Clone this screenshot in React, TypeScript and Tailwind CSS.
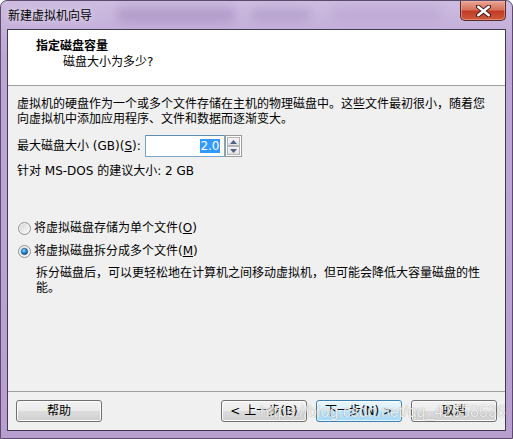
import React from 'react'

const font = "font-['DejaVu_Sans','Noto_Sans_CJK_SC',sans-serif]"

function Radio({ checked }: { checked?: boolean }) {
    return (
        <svg width="13" height="13" viewBox="0 0 13 13" className="shrink-0">
            <defs>
                <linearGradient id="rbFill" x1="0" y1="0" x2="1" y2="1">
                    <stop offset="0" stopColor="#d6d6d6" />
                    <stop offset="1" stopColor="#fbfbfb" />
                </linearGradient>
                <radialGradient id="rbDot" cx="0.4" cy="0.35" r="0.7">
                    <stop offset="0" stopColor="#8fe0ff" />
                    <stop offset="0.5" stopColor="#2a8ad4" />
                    <stop offset="1" stopColor="#0f3e75" />
                </radialGradient>
            </defs>
            <circle cx="6.5" cy="6.5" r="6" fill="#f4f4f4" stroke="#8c8f91" strokeWidth="1" />
            <circle cx="6.5" cy="6.5" r="4.6" fill="url(#rbFill)" />
            {checked && <circle cx="6.5" cy="6.5" r="3.2" fill="url(#rbDot)" stroke="#1b4a7a" strokeWidth="0.5" />}
        </svg>
    )
}

function WinButton({ children, isDefault }: { children: React.ReactNode; isDefault?: boolean }) {
    return (
        <div
            className={
                isDefault
                    ? 'w-[86px] h-[22px] rounded-[3px] border border-[#3c7fb1] shadow-[inset_0_0_0_1px_#ffffffb0] bg-[linear-gradient(to_bottom,#eaf6fd_0%,#d9f0fc_50%,#bee6fd_50%,#a7d9f5_100%)] flex items-center justify-center text-[12px] leading-[14px] text-black'
                    : 'w-[86px] h-[22px] rounded-[3px] border border-[#707070] shadow-[inset_0_0_0_1px_#fcfcfc] bg-[linear-gradient(to_bottom,#f2f2f2_0%,#ebebeb_50%,#dddddd_50%,#cfcfcf_100%)] flex items-center justify-center text-[12px] leading-[14px] text-black'
            }
        >
            {children}
        </div>
    )
}

function SpinArrow({ up }: { up?: boolean }) {
    return (
        <div className="flex-1 border border-[#b4b4b4] bg-[linear-gradient(to_bottom,#f6f6f6,#e2e2e2)] flex items-center justify-center">
            <svg width="7" height="4" viewBox="0 0 7 4">
                {up ? <path d="M0 4 L3.5 0 L7 4 Z" fill="#4d6185" /> : <path d="M0 0 L3.5 4 L7 0 Z" fill="#4d6185" />}
            </svg>
        </div>
    )
}

function CloseButton() {
    return (
        <div className="relative w-[46px] h-[20px] rounded-b-[5px] border border-t-0 border-[#5a2a24] bg-[linear-gradient(to_bottom,#eba494_0%,#d8735d_45%,#c23c25_55%,#cf5a3d_100%)] shadow-[inset_0_0_0_1px_#f0b8aa80] flex items-center justify-center">
            <svg width="15" height="12" viewBox="0 0 15 12">
                <path d="M2 1.5 L13 10.5 M13 1.5 L2 10.5" stroke="#3a1a16" strokeWidth="4.2" strokeLinecap="round" />
                <path d="M2.2 1.7 L12.8 10.3 M12.8 1.7 L2.2 10.3" stroke="#ffffff" strokeWidth="2.4" strokeLinecap="round" />
            </svg>
        </div>
    )
}

export default function App() {
    return (
        <div className={`${font} relative w-[513px] h-[439px] overflow-hidden rounded-t-[7px] border border-[#5b4c6b] bg-[linear-gradient(to_bottom,#cdbce0_0%,#bea7d6_12%,#b89fd0_100%)] flex flex-col`}>
            {/* vidro desfocado atrás da barra de título */}
            <div className="absolute left-[115px] top-[6px] w-[120px] h-[16px] rounded-full bg-[#8c74ac]/35 blur-[5px]" />
            <div className="absolute left-[250px] top-[8px] w-[60px] h-[12px] rounded-full bg-[#8c74ac]/30 blur-[5px]" />
            <div className="absolute left-[330px] top-[6px] w-[110px] h-[14px] rounded-full bg-[#a48cc2]/30 blur-[6px]" />

            {/* barra de título */}
            <div className="relative h-[28px] shrink-0 flex items-start justify-between pl-[7px] pr-[6px]">
                <span className="mt-[8px] text-[12px] leading-[14px] text-black [text-shadow:0_0_6px_#ffffffc0]">新建虚拟机向导</span>
                <CloseButton />
            </div>

            {/* área cliente */}
            <div className="relative mx-[6px] flex-1 border border-[#3f3a4c] bg-[#f0f0f0] flex flex-col">
                <div className="h-[56px] shrink-0 bg-white border-b border-[#a0a0a0] pt-[9px]">
                    <div className="pl-[28px] text-[12px] leading-[14px] font-bold text-black">指定磁盘容量</div>
                    <div className="pl-[55px] mt-[2px] text-[12px] leading-[14px] text-black">磁盘大小为多少?</div>
                </div>

                <div className="flex-1 pl-[9px] pt-[11px] text-[12px] text-black">
                    <p className="leading-[15px]">
                        虚拟机的硬盘作为一个或多个文件存储在主机的物理磁盘中。这些文件最初很小，随着您
                        <br />
                        向虚拟机中添加应用程序、文件和数据而逐渐变大。
                    </p>

                    <div className="mt-[8px] flex items-center h-[22px]">
                        <span className="leading-[14px] w-[128px]">
                            最大磁盘大小 (GB)(<u>S</u>):
                        </span>
                        <div className="flex h-[22px]">
                            <div className="w-[80px] h-[22px] bg-white border border-[#7aa6c9] border-t-[#5d8db3] flex items-center justify-end pr-[4px]">
                                <span className="bg-[#3399ff] text-white leading-[14px] px-[0.5px]">2.0</span>
                            </div>
                            <div className="w-[17px] h-[22px] flex flex-col border border-[#9a9a9a] bg-white p-[1px]">
                                <SpinArrow up />
                                <SpinArrow />
                            </div>
                        </div>
                    </div>

                    <p className="mt-[7px] leading-[14px]">针对 MS-DOS 的建议大小: 2 GB</p>

                    <div className="mt-[43px] flex items-center gap-[3px] h-[14px] pl-[1px]">
                        <Radio />
                        <span className="leading-[14px]">
                            将虚拟磁盘存储为单个文件(<u>O</u>)
                        </span>
                    </div>
                    <div className="mt-[9px] flex items-center gap-[3px] h-[14px] pl-[1px]">
                        <Radio checked />
                        <span className="leading-[14px]">
                            将虚拟磁盘拆分成多个文件(<u>M</u>)
                        </span>
                    </div>
                    <p className="mt-[8px] pl-[19px] leading-[15px]">
                        拆分磁盘后，可以更轻松地在计算机之间移动虚拟机，但可能会降低大容量磁盘的性
                        <br />
                        能。
                    </p>
                </div>

                <div className="h-[39px] shrink-0 border-t border-[#a0a0a0] flex items-start justify-between px-[8px] pt-[8px]">
                    <WinButton>帮助</WinButton>
                    <div className="flex gap-[9px]">
                        <WinButton>&lt; 上一步(B)</WinButton>
                        <WinButton isDefault>下一步(N) &gt;</WinButton>
                        <WinButton>取消</WinButton>
                    </div>
                </div>
            </div>
            <div className="h-[7px] shrink-0" />

            {/* marca d'água */}
            <span className="absolute left-[259px] top-[401px] font-['Liberation_Sans',sans-serif] text-[16px] leading-[20px] text-white/85 [text-shadow:0_0_1px_#00000070] pointer-events-none">
                https://blog.csdn.net/qq_42558536
            </span>
        </div>
    )
}
